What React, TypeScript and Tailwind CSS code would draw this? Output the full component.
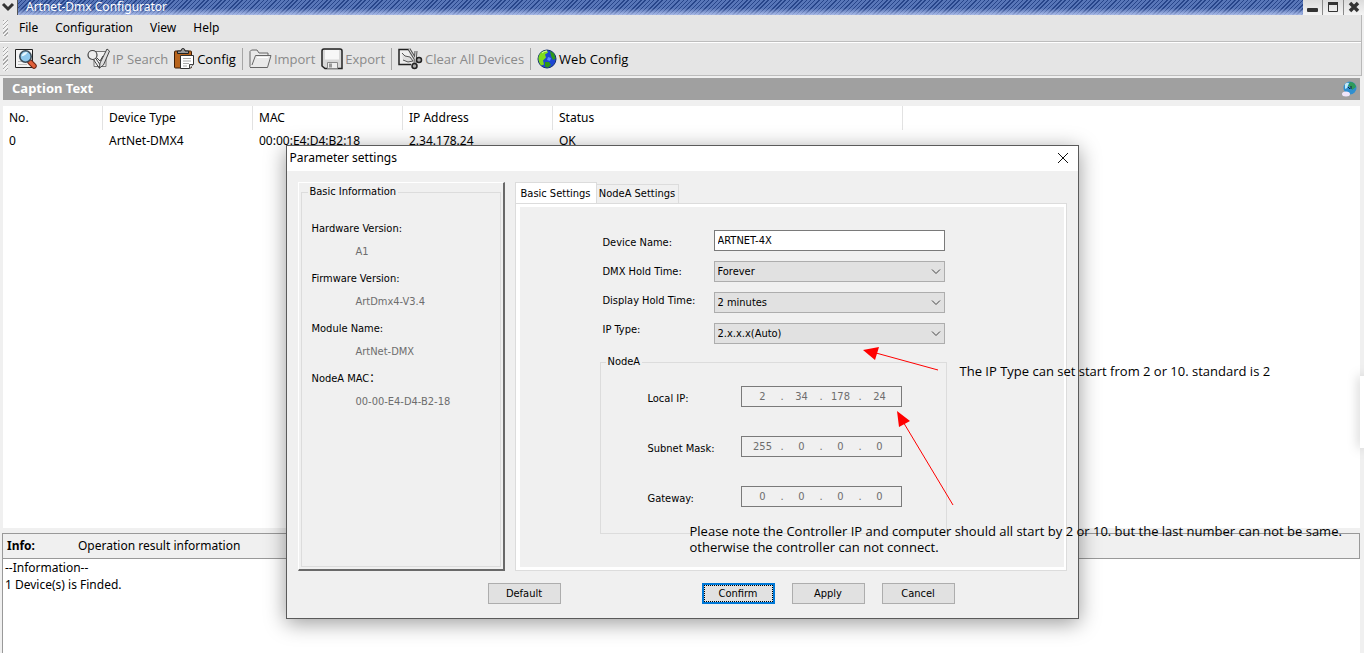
import type { ReactNode } from "react";

const menus = ["File", "Configuration", "View", "Help"];

const info = [
  { label: "Hardware Version:", value: "A1" },
  { label: "Firmware Version:", value: "ArtDmx4-V3.4" },
  { label: "Module Name:", value: "ArtNet-DMX" },
  { label: "NodeA MAC：", value: "00-00-E4-D4-B2-18" },
];

const addresses = [
  { id: "local-ip", label: "Local IP:", parts: ["2", "34", "178", "24"] },
  { id: "subnet", label: "Subnet Mask:", parts: ["255", "0", "0", "0"] },
  { id: "gateway", label: "Gateway:", parts: ["0", "0", "0", "0"] },
];

function SearchIcon() {
  return (
    <svg width="23" height="22" viewBox="0 0 23 22">
      <path d="M.5 1.500h17v18H.5z" fill="#f4f4f4" stroke="#222" />
      <path d="M3 16.500h9M3 13.500h5" stroke="#bbb" />
      <path d="m15 14 4 4" stroke="#6a2414" strokeWidth="5.500" strokeLinecap="round" />
      <path d="m15 14 4 4" stroke="#e2603a" strokeWidth="3.500" strokeLinecap="round" />
      <circle cx="10.500" cy="8.500" r="5.700" fill="#8fc9ee" stroke="#3c4c58" strokeWidth="1.600" />
      <path d="M6.500 8.500q1-4.500 6-4.500-1 3-6 4.500" fill="#e8f8ff" />
    </svg>
  );
}

function IpSearchIcon() {
  return (
    <svg width="23" height="22" viewBox="0 0 23 22" fill="none" stroke="#444">
      <path d="M7 3.500h12v15H7z" fill="#f1f1f1" stroke="#777" />
      <circle cx="5.500" cy="7" r="4.500" fill="#eee" strokeWidth="1.200" />
      <path d="m8.500 10 6 9M6.500 11.500l6 9" />
      <path d="m20 1 2.500 2-6 14-4 3 .5-5z" fill="#ddd" />
      <path d="m10 10 3 3 3-5" />
    </svg>
  );
}

function ConfigIcon() {
  return (
    <svg width="21" height="22" viewBox="0 0 21 22">
      <rect x=".5" y="3" width="17" height="17" rx="1" fill="#b8641c" stroke="#3c1e08" />
      <path d="M3.500 5.500V3H7Q7 .5 9 .5T11 3h3.500v2.500z" fill="#999" stroke="#222" />
      <path d="M6.500 7.500h13v9l-4 4h-9z" fill="#fff" stroke="#333" />
      <path d="M9 10.500h8M9 13h8M9 15.500h6M9 18h4" stroke="#aaa" />
      <path d="M15.500 20.500v-4h4" fill="#ddd" stroke="#444" />
    </svg>
  );
}

function FolderIcon() {
  return (
    <svg width="23" height="22" viewBox="0 0 23 22" fill="#e9e9e9" stroke="#666">
      <path d="M1 19V3.500L2.500 2H8l2 3h9v3" />
      <path d="M1 19.500h17.500L22 7.500H6.500L3 17" />
      <path d="M8 9.500h11" stroke="#fff" />
    </svg>
  );
}

function DiskIcon() {
  return (
    <svg width="22" height="22" viewBox="0 0 22 22">
      <path
        d="M1 3q0-2 2-2h16q2 0 2 2v17.500H4L1 18z"
        fill="#d8d8d8"
        stroke="#222"
        strokeWidth="1.500"
      />
      <path d="M4 2h14v9.500H4z" fill="#f7f7f7" />
      <path d="M6.500 14.500h10v6h-10z" fill="#eee" stroke="#888" />
      <path d="M8 15.500h3v4H8z" fill="#999" />
    </svg>
  );
}

function ClearIcon() {
  return (
    <svg width="25" height="22" viewBox="0 0 25 22" fill="none" stroke="#222">
      <path d="M11 1.500H1v15h12" fill="#eee" strokeWidth="1.500" />
      <path d="m4 5 3 3 5 1 3 4-5 1-5-2" fill="#ddd" stroke="#555" />
      <path d="m11 1 8 13M18 3l-1 12" stroke="#555" strokeWidth="3" />
      <path d="m11 1 8 13M18 3l-1 12" stroke="#ddd" />
      <circle cx="21" cy="12" r="2.500" fill="#aaa" strokeWidth="1.500" />
      <circle cx="16.500" cy="18" r="2.500" fill="#aaa" strokeWidth="1.500" />
    </svg>
  );
}

function GlobeIcon() {
  return (
    <svg width="20" height="20" viewBox="0 0 20 20">
      <circle cx="10" cy="10" r="9" fill="#1d46d4" stroke="#14306e" />
      <path d="M1.500 8Q3 1.500 10 1.500l1 2-3 2 1 3-3 3 1 4-3 1q-3-4-2.500-8.500" fill="#7fdc1c" />
      <path d="m13 2 4 2.500 1.500 5L16 11l-2-4zM8 13l4 0 2 3-3 2.500-3-1z" fill="#2f9a18" />
      <path d="M5 4q2-2 5-2" stroke="#e0fab0" fill="none" />
      <path d="m11 8 3 1-1 3-3-1z" fill="#5a8cff" />
    </svg>
  );
}

function ToolButton({ icon, label, disabled }: { icon: ReactNode; label: string; disabled?: boolean }) {
  return (
    <button type="button" disabled={disabled} className="flex items-center gap-[2px] disabled:text-[#8a8a8a]">
      {icon}
      <span>{label}</span>
    </button>
  );
}

function Grip({ className }: { className: string }) {
  return (
    <span
      className={`w-[5px] bg-[repeating-linear-gradient(135deg,#a8a8a8_0_1px,#f2f2f2_1px_3px)] ${className}`}
    />
  );
}

function Divider() {
  return <span className="h-[22px] w-px bg-[#a6a6a6]" />;
}

function SelectBox({ id, value }: { id: string; value: string }) {
  return (
    <div className="relative">
      <select
        id={id}
        defaultValue={value}
        className="block h-[21px] w-full appearance-none border border-[#adadad] bg-[#e1e1e1] px-[3px] leading-[19px]"
      >
        <option>{value}</option>
      </select>
      <svg
        width="10"
        height="6"
        viewBox="0 0 10 6"
        className="pointer-events-none absolute top-2 right-1"
        fill="none"
        stroke="#444"
      >
        <path d="m1 .5 4 4 4-4" />
      </svg>
    </div>
  );
}

function AddressField({ id, label, parts }: { id: string; label: string; parts: string[] }) {
  return (
    <div className="flex items-center">
      <label htmlFor={id} className="w-[93px] pt-1">
        {label}
      </label>
      <div className="flex h-[21px] w-[161px] items-center border border-[#7a7a7a] px-[3px] text-[#6d6d6d]">
        {parts.map((part, i) => (
          <span key={i} className="flex items-center">
            {i > 0 && <span className="w-[3px]">.</span>}
            <input
              id={i === 0 ? id : undefined}
              aria-label={i === 0 ? undefined : `${label} ${i + 1}`}
              disabled
              defaultValue={part}
              className="w-9 text-center"
            />
          </span>
        ))}
      </div>
    </div>
  );
}

function DialogButton({ label, primary }: { label: string; primary?: boolean }) {
  return primary ? (
    <button type="button" className="h-[21px] w-[73px] border-2 border-[#0078d7] bg-[#e1e1e1]">
      <span className="block h-full border border-dotted border-black leading-[15px]">{label}</span>
    </button>
  ) : (
    <button type="button" className="h-[21px] w-[73px] border border-[#adadad] bg-[#e1e1e1]">
      {label}
    </button>
  );
}

function ParameterDialog() {
  return (
    <section
      aria-label="Parameter settings"
      className="w-[793px] border border-[#5a5a5a] bg-[#f0f0f0] font-['DejaVu_Sans_Condensed','Noto_Sans_CJK_SC',sans-serif] text-[11px] leading-[14px] shadow-[0_4px_20px_rgba(0,0,0,0.4)]"
    >
      <header className="flex h-[25px] items-center justify-between bg-white pr-[9px] pb-[2px] pl-[3px]">
        <h2 className="font-['Noto_Sans',sans-serif] text-xs">Parameter settings</h2>
        <button type="button" aria-label="Close">
          <svg width="12" height="12" viewBox="0 0 12 12" stroke="#111">
            <path d="m1 1 10 10M11 1 1 11" />
          </svg>
        </button>
      </header>

      <div className="flex gap-[10px] px-[11px] pt-[11px]">
        <div className="flex w-[207px] border-t border-r-2 border-b-2 border-l border-t-white border-r-[#696969] border-b-[#696969] border-l-white p-[2px]">
          <fieldset className="w-full border border-[#dcdcdc] px-[10px]">
            <legend className="-ml-1 px-[2px]">Basic Information</legend>
            <dl className="pt-[18px]">
              {info.map((item) => (
                <div key={item.label} className="h-[50px] leading-[23px]">
                  <dt>{item.label}</dt>
                  <dd className="pl-11 text-[#6d6d6d]">{item.value}</dd>
                </div>
              ))}
            </dl>
          </fieldset>
        </div>

        <div className="flex w-[552px] flex-col">
          <div role="tablist" className="flex items-end">
            <button
              type="button"
              role="tab"
              aria-selected="true"
              className="-mb-px h-[22px] w-[82px] border border-b-0 border-[#dcdcdc] bg-white"
            >
              Basic Settings
            </button>
            <button
              type="button"
              role="tab"
              aria-selected="false"
              className="h-[19px] w-[82px] border border-b-0 border-l-0 border-[#dcdcdc]"
            >
              NodeA Settings
            </button>
          </div>
          <div role="tabpanel" className="border border-[#dcdcdc] bg-white py-[3px] pr-[2px] pl-1">
            <div className="bg-[#f0f0f0] pt-[21px] pr-[117px] pb-[33px] pl-20">
              <div className="flex pl-[3px]">
                <div className="flex w-[111px] shrink-0 flex-col leading-[29px]">
                  <label htmlFor="device-name">Device Name:</label>
                  <label htmlFor="dmx-hold">DMX Hold Time:</label>
                  <label htmlFor="display-hold">Display Hold Time:</label>
                  <label htmlFor="ip-type">IP Type:</label>
                </div>
                <div className="flex w-[231px] shrink-0 flex-col gap-[10px] pt-[2px]">
                  <input
                    id="device-name"
                    defaultValue="ARTNET-4X"
                    className="h-[21px] border border-[#7a7a7a] bg-white px-[3px]"
                  />
                  <SelectBox id="dmx-hold" value="Forever" />
                  <SelectBox id="display-hold" value="2 minutes" />
                  <SelectBox id="ip-type" value="2.x.x.x(Auto)" />
                </div>
              </div>
              <fieldset className="mt-[11px] border border-[#dcdcdc] pb-[26px] pl-[47px]">
                <legend className="-ml-[42px] px-[2px]">NodeA</legend>
                <div className="flex flex-col gap-[29px] pt-[17px]">
                  {addresses.map((address) => (
                    <AddressField key={address.id} {...address} />
                  ))}
                </div>
              </fieldset>
            </div>
          </div>
        </div>
      </div>

      <footer className="flex justify-between pt-3 pr-[123px] pb-[14px] pl-[201px]">
        <DialogButton label="Default" />
        <div className="flex gap-[17px]">
          <DialogButton label="Confirm" primary />
          <DialogButton label="Apply" />
          <DialogButton label="Cancel" />
        </div>
      </footer>
    </section>
  );
}

export default function App() {
  return (
    <main className="relative flex h-screen flex-col overflow-hidden bg-[#f0f0f0] font-['Noto_Sans',sans-serif] text-[13px] leading-[17px] text-black">
      <header className="flex h-[15px] shrink-0 justify-between bg-[linear-gradient(to_bottom,transparent_55%,rgba(200,212,250,0.75)),repeating-linear-gradient(135deg,#27458a_0_1px,#5876b8_1px_3px)]">
        <div className="flex">
          <button type="button" aria-label="Window menu" className="w-[18px] border-r border-[#555] bg-[#e6e6e6]">
            <svg width="16" height="14" viewBox="0 0 16 14" fill="none" stroke="#333" strokeWidth="3">
              <path d="m3 3 5 5 5-5" />
            </svg>
          </button>
          <h1 className="pl-2 text-xs leading-[13px] text-white">Artnet-Dmx Configurator</h1>
        </div>
        <div className="flex bg-[linear-gradient(to_bottom,#dcdcdc,#f4f4f4)]">
          <button type="button" aria-label="Minimize" className="w-5 border-r border-[#8a8a8a]">
            <svg width="19" height="14" viewBox="0 0 19 14">
              <rect x="4" y="7" width="11" height="4" rx="1" fill="#333" />
            </svg>
          </button>
          <button type="button" aria-label="Maximize" className="w-[21px] border-r border-[#8a8a8a]">
            <svg width="20" height="14" viewBox="0 0 20 14" fill="none" stroke="#333">
              <path d="M5.500 1.500h9v9h-9z" />
              <path d="M5 2.500h10" strokeWidth="3" />
            </svg>
          </button>
          <button type="button" aria-label="Close window" className="w-5">
            <svg width="20" height="14" viewBox="0 0 20 14" stroke="#333" strokeWidth="3.500">
              <path d="m6 2 8 8M14 2l-8 8" />
            </svg>
          </button>
        </div>
      </header>

      <div className="mr-[2px] shrink-0 border-r border-[#b8b8b8] bg-[#e5e5e5]">
        <nav className="flex h-[27px] items-center border-b border-[#bdbdbd] pl-[3px]">
          <Grip className="mr-[11px] h-4" />
          <div className="flex gap-[17px] text-xs leading-[18px]">
            {menus.map((menu) => (
              <button key={menu} type="button">
                {menu}
              </button>
            ))}
          </div>
        </nav>
        <div className="flex h-[34px] items-center gap-[6px] border-t border-b border-t-white border-b-[#bdbdbd] pl-[3px] font-['Open_Sans',sans-serif]">
          <Grip className="mr-px h-6" />
          <ToolButton icon={<SearchIcon />} label="Search" />
          <ToolButton icon={<IpSearchIcon />} label="IP Search" disabled />
          <ToolButton icon={<ConfigIcon />} label="Config" />
          <Divider />
          <ToolButton icon={<FolderIcon />} label="Import" disabled />
          <ToolButton icon={<DiskIcon />} label="Export" disabled />
          <Divider />
          <ToolButton icon={<ClearIcon />} label="Clear All Devices" disabled />
          <Divider />
          <ToolButton icon={<GlobeIcon />} label="Web Config" />
        </div>
      </div>

      <div className="mr-1 ml-[3px] mt-[2px] flex h-[22px] shrink-0 items-center justify-between bg-[#a0a0a0] pr-[3px] pl-[9px]">
        <span className="pb-[2px] font-bold text-white">Caption Text</span>
        <svg width="16" height="18" viewBox="0 0 16 18">
          <circle cx="9" cy="8" r="6.500" fill="#2f8fd0" />
          <path d="M9 2q5 0 6 5l-4 3-1-3-3-1z" fill="#2f9a5a" />
          <path d="M4 4q2-2 4-1L6 8 4 9z" fill="#bfe8f8" />
          <path d="m7 7 2 2M10 6v3" stroke="#123" />
          <ellipse cx="5" cy="14" rx="4" ry="2.500" fill="#f0e6fa" />
        </svg>
      </div>

      <div className="mr-1 ml-[3px] mt-[6px] flex-1 bg-white">
        <table className="w-full table-fixed border-separate border-spacing-0 text-left text-xs">
          <colgroup>
            <col className="w-[100px]" />
            <col className="w-[150px]" />
            <col className="w-[150px]" />
            <col className="w-[150px]" />
            <col className="w-[350px]" />
            <col />
          </colgroup>
          <thead>
            <tr className="h-6">
              {["No.", "Device Type", "MAC", "IP Address", "Status"].map((name) => (
                <th key={name} className="border-r border-[#e2e2e2] pl-[6px] font-normal">
                  {name}
                </th>
              ))}
              <td />
            </tr>
          </thead>
          <tbody>
            <tr className="h-[22px]">
              {["0", "ArtNet-DMX4", "00:00:E4:D4:B2:18", "2.34.178.24", "OK"].map((cell) => (
                <td key={cell} className="pl-[6px]">
                  {cell}
                </td>
              ))}
              <td />
            </tr>
          </tbody>
        </table>
      </div>

      <div className="mr-1 ml-[2px] mt-[5px] flex h-[26px] shrink-0 items-center border border-[#999] pl-1 text-xs leading-[18px]">
        <span className="w-[71px] font-bold">Info:</span>
        <span>Operation result information</span>
      </div>
      <div className="mr-1 ml-[2px] h-[94px] shrink-0 border-l border-[#999] bg-white pl-[2px] text-xs leading-[17px]">
        <p>--Information--</p>
        <p>1 Device(s) is Finded.</p>
      </div>

      <div className="absolute top-[376px] right-0 h-[72px] w-1 bg-white shadow-[0_0_12px_rgba(0,0,0,0.35)]" />

      <div className="absolute inset-x-0 top-[145px] flex justify-center">
        <ParameterDialog />
      </div>

      {/* Notes and arrows drawn over the window */}
      <div className="pointer-events-none absolute inset-x-0 top-0 flex justify-center font-['Open_Sans',sans-serif] text-[13px] leading-4">
        <div className="relative w-[793px]">
          <svg width="120" height="180" viewBox="0 0 120 180" className="absolute top-[340px] left-[570px]">
            <path d="M82 30 20 13M97 165 46 80" stroke="#f00" fill="none" />
            <path d="m7 10 16-3-4 13zM41 71l13 10-11 6z" fill="#f00" />
          </svg>
          <p className="absolute top-[363px] left-[674px] whitespace-nowrap">
            The IP Type can set start from 2 or 10. standard is 2
          </p>
          <p className="absolute top-[523px] left-[404px] whitespace-nowrap">
            Please note the Controller IP and computer should all start by 2 or 10. but the last number can not be same.
            <br />
            otherwise the controller can not connect.
          </p>
        </div>
      </div>
    </main>
  );
}
